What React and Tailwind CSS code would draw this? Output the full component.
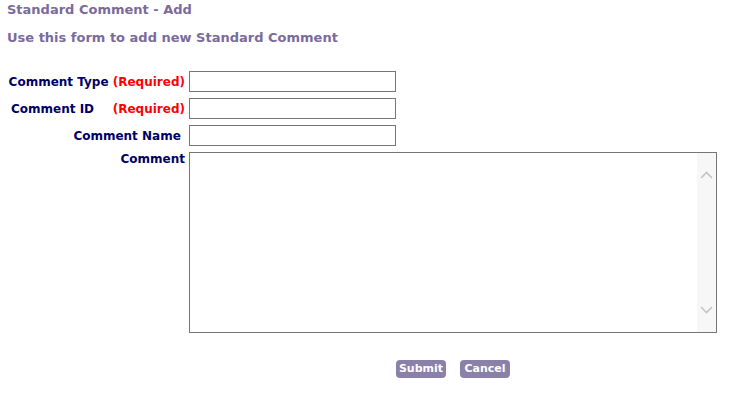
import { useState } from 'react';

const labelCls = 'text-[12px] font-bold text-[#000066] text-right whitespace-pre';
const inputCls = 'h-[21px] w-[207px] border border-[#767676] bg-white px-1 text-[13px] outline-none';

function FakeScrollbar() {
  return (
    <div className="w-[19px] bg-[#f7f7f7] flex flex-col items-center justify-between py-[18px]">
      <svg width="13" height="8" viewBox="0 0 13 8" fill="none" stroke="#c4c4c4" strokeWidth="1.6">
        <path d="M1 7 L6.5 1.5 L12 7" />
      </svg>
      <svg width="13" height="8" viewBox="0 0 13 8" fill="none" stroke="#c4c4c4" strokeWidth="1.6">
        <path d="M1 1 L6.5 6.5 L12 1" />
      </svg>
    </div>
  );
}

export default function App() {
  const [form, setForm] = useState({ type: '', id: '', name: '', comment: '' });
  const set = (k) => (e) => setForm(f => ({ ...f, [k]: e.target.value }));

  return (
    <div className="min-h-[399px] bg-white pl-[7px] pt-[2px] font-['DejaVu_Sans','Verdana',sans-serif]">
      <h1 className="text-[13px] font-bold leading-[16px] text-[#7b6b9b]">Standard Comment - Add</h1>
      <p className="mt-[12px] text-[13px] font-bold leading-[16px] text-[#7b6b9b]">
        Use this form to add new Standard Comment
      </p>

      {/* ── form grid ── */}
      <div className="mt-[25px] grid grid-cols-[178px_auto] gap-x-[4px] gap-y-[6px] items-center">
        <div className={labelCls}>
          Comment Type <span className="text-[#ff0000]">(Required)</span>
        </div>
        <input className={inputCls} value={form.type} onChange={set('type')} />

        <div className={`${labelCls} flex justify-end`}>
          <span className="ml-[4px]">Comment ID</span>
          <span className="ml-auto text-[#ff0000]">(Required)</span>
        </div>
        <input className={inputCls} value={form.id} onChange={set('id')} />

        <div className={labelCls}>Comment Name </div>
        <input className={inputCls} value={form.name} onChange={set('name')} />

        <div className={`${labelCls} self-start -mt-[2px]`}>Comment</div>
        <div className="flex h-[181px] w-[528px] border border-[#767676]">
          <textarea
            className="flex-1 resize-none px-1 text-[13px] outline-none"
            value={form.comment}
            onChange={set('comment')}
          />
          <FakeScrollbar />
        </div>
      </div>

      {/* ── buttons ── */}
      <div className="ml-[182px] mt-[27px] flex w-[528px] justify-center gap-[14px]">
        <button className="h-[18px] w-[50px] rounded-[4px] bg-[#8a80a8] text-[11px] font-bold leading-[18px] text-white">
          Submit
        </button>
        <button className="h-[18px] w-[50px] rounded-[4px] bg-[#8a80a8] text-[11px] font-bold leading-[18px] text-white">
          Cancel
        </button>
      </div>
    </div>
  );
}
